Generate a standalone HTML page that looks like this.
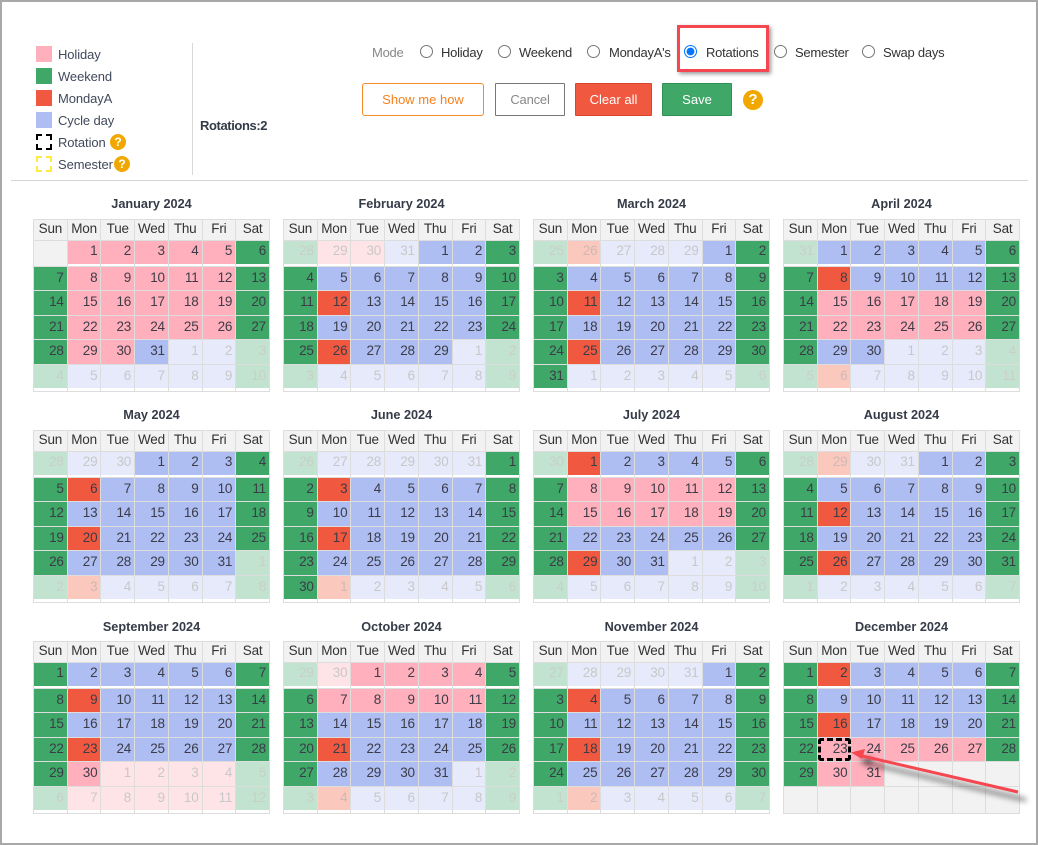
<!DOCTYPE html>
<html><head><meta charset="utf-8"><title>Calendar</title>
<style>
html,body{margin:0;padding:0;background:#fff}
body{position:relative;width:1038px;height:845px;overflow:hidden;font-family:"Liberation Sans",sans-serif;color:#3c4252}
#f{position:absolute;left:0;top:0;width:1034px;height:841px;border:2px solid #a8a8a8;pointer-events:none}
.a{position:absolute;white-space:nowrap}
.s{position:absolute;left:36px;width:16px;height:16px}
.l{position:absolute;left:58px;font-size:13px;line-height:16px;letter-spacing:-.1px;color:#404a5c;margin-top:1px}
.q{position:absolute;width:16px;height:16px;border-radius:50%;background:#f0a800;color:#fff;font-weight:bold;font-size:12px;line-height:16px;text-align:center}
.r{position:absolute;top:45px;margin:0;width:13px;height:13px}
.t{position:absolute;top:45px;font-size:13px;line-height:16px;color:#333;letter-spacing:-.25px;white-space:nowrap}
.btn{position:absolute;top:83px;height:33px;box-sizing:border-box;font-size:13px;line-height:31px;text-align:center;border:1px solid;border-radius:1px}
.h{position:absolute;width:237px;text-align:center;font-weight:bold;font-size:12.7px;line-height:16px;color:#363b48;margin-top:1px}
table{position:absolute;width:237px;table-layout:fixed;border-collapse:collapse;border:1px solid #ddd;font-size:13.5px;color:#3c3c48;letter-spacing:-.2px}
th,td{border:1px solid #ddd;padding:0}
th{background:#f2f2f2;font-weight:normal;text-align:center;height:21px;color:#333;padding-bottom:3px;box-sizing:border-box;line-height:14px}
td{text-align:right;padding-right:3px;padding-bottom:1px;box-sizing:border-box;height:24.5px;line-height:14px;background:linear-gradient(var(--c),var(--c)) 0 0/100% calc(100% - var(--g,0px)) no-repeat}
tr.o td{height:25.5px;--g:2px;padding-bottom:4px}
tr.z td{height:27.5px;--g:3px;padding-bottom:3px}
.p{--c:#ffb0bc}.g{--c:#3fa767}.r0{--c:#f0583f}.b{--c:#aebef2}.e{--c:#f2f2f2;--g:0px!important}
.x{--c:#ffe4e7;color:#c8c8c8}.y{--c:#c2e3cf;color:#c8cfc8}.w{--c:#fbc8be;color:#d0b8b4}.v{--c:#e6eafb;color:#c8c8c8}
tr.o td.e,tr.z td.e{--g:0px}
</style></head><body>
<div class="s" style="top:46px;background:#ffb0bc"></div><div class="l" style="top:46px">Holiday</div>
<div class="s" style="top:68px;background:#3fa767"></div><div class="l" style="top:68px">Weekend</div>
<div class="s" style="top:90px;background:#f0583f"></div><div class="l" style="top:90px">MondayA</div>
<div class="s" style="top:112px;background:#aebef2"></div><div class="l" style="top:112px">Cycle day</div>
<svg class="s" style="top:134px" viewBox="0 0 16 16"><path d="M1 6V1H6M10 1H15V6M15 10V15H10M6 15H1V10" fill="none" stroke="#000" stroke-width="2"/></svg><div class="l" style="top:134px">Rotation</div><div class="q" style="left:110px;top:134px">?</div>
<svg class="s" style="top:156px" viewBox="0 0 16 16"><path d="M1 6V1H6M10 1H15V6M15 10V15H10M6 15H1V10" fill="none" stroke="#ffe93c" stroke-width="2"/></svg><div class="l" style="top:156px">Semester</div><div class="q" style="left:114px;top:156px">?</div>
<div class="a" style="left:192px;top:43px;width:1px;height:132px;background:#d8d8d8"></div>
<div class="a" style="left:11px;top:180px;width:1017px;height:1px;background:#d5d5d5"></div>
<div class="a" style="left:200px;top:118px;font-size:13px;line-height:16px;font-weight:bold;color:#333a48;letter-spacing:-.4px">Rotations:2</div>

<div class="t" style="left:372px;color:#888">Mode</div>
<input class="r" type="radio" style="left:420px"><div class="t" style="left:441px">Holiday</div>
<input class="r" type="radio" style="left:498px"><div class="t" style="left:519px">Weekend</div>
<input class="r" type="radio" style="left:587px"><div class="t" style="left:609px">MondayA's</div>
<input class="r" type="radio" checked style="left:684px"><div class="t" style="left:706px">Rotations</div>
<input class="r" type="radio" style="left:774px"><div class="t" style="left:795px">Semester</div>
<input class="r" type="radio" style="left:862px"><div class="t" style="left:883px">Swap days</div>
<div class="a" style="left:677px;top:25px;width:86px;height:41px;border:3px solid #f4474f;box-shadow:2px 2px 4px rgba(0,0,0,.4)"></div>

<div class="btn" style="left:362px;width:122px;border-color:#f58a2a;color:#f58220;border-radius:3px">Show me how</div>
<div class="btn" style="left:495px;width:70px;border-color:#777;color:#888;letter-spacing:-.2px">Cancel</div>
<div class="btn" style="left:575px;width:77px;border-color:#d8452e;background:#f0583f;color:#fff">Clear all</div>
<div class="btn" style="left:662px;width:70px;border-color:#2f8f55;background:#3fa767;color:#fff">Save</div>
<div class="q" style="left:743px;top:90px;width:20px;height:20px;line-height:20px;font-size:15px">?</div>

<div class="h" style="left:33px;top:195px">January 2024</div>
<table style="left:33px;top:219px"><tr><th>Sun<th>Mon<th>Tue<th>Wed<th>Thu<th>Fri<th>Sat
<tr class="o"><td class="e"><td class="p">1<td class="p">2<td class="p">3<td class="p">4<td class="p">5<td class="g">6
<tr><td class="g">7<td class="p">8<td class="p">9<td class="p">10<td class="p">11<td class="p">12<td class="g">13
<tr><td class="g">14<td class="p">15<td class="p">16<td class="p">17<td class="p">18<td class="p">19<td class="g">20
<tr><td class="g">21<td class="p">22<td class="p">23<td class="p">24<td class="p">25<td class="p">26<td class="g">27
<tr><td class="g">28<td class="p">29<td class="p">30<td class="b">31<td class="v">1<td class="v">2<td class="y">3
<tr class="z"><td class="y">4<td class="v">5<td class="v">6<td class="v">7<td class="v">8<td class="v">9<td class="y">10
</table>

<div class="h" style="left:283px;top:195px">February 2024</div>
<table style="left:283px;top:219px"><tr><th>Sun<th>Mon<th>Tue<th>Wed<th>Thu<th>Fri<th>Sat
<tr class="o"><td class="y">28<td class="x">29<td class="x">30<td class="v">31<td class="b">1<td class="b">2<td class="g">3
<tr><td class="g">4<td class="b">5<td class="b">6<td class="b">7<td class="b">8<td class="b">9<td class="g">10
<tr><td class="g">11<td class="r0">12<td class="b">13<td class="b">14<td class="b">15<td class="b">16<td class="g">17
<tr><td class="g">18<td class="b">19<td class="b">20<td class="b">21<td class="b">22<td class="b">23<td class="g">24
<tr><td class="g">25<td class="r0">26<td class="b">27<td class="b">28<td class="b">29<td class="v">1<td class="y">2
<tr class="z"><td class="y">3<td class="v">4<td class="v">5<td class="v">6<td class="v">7<td class="v">8<td class="y">9
</table>

<div class="h" style="left:533px;top:195px">March 2024</div>
<table style="left:533px;top:219px"><tr><th>Sun<th>Mon<th>Tue<th>Wed<th>Thu<th>Fri<th>Sat
<tr class="o"><td class="y">25<td class="w">26<td class="v">27<td class="v">28<td class="v">29<td class="b">1<td class="g">2
<tr><td class="g">3<td class="b">4<td class="b">5<td class="b">6<td class="b">7<td class="b">8<td class="g">9
<tr><td class="g">10<td class="r0">11<td class="b">12<td class="b">13<td class="b">14<td class="b">15<td class="g">16
<tr><td class="g">17<td class="b">18<td class="b">19<td class="b">20<td class="b">21<td class="b">22<td class="g">23
<tr><td class="g">24<td class="r0">25<td class="b">26<td class="b">27<td class="b">28<td class="b">29<td class="g">30
<tr class="z"><td class="g">31<td class="v">1<td class="v">2<td class="v">3<td class="v">4<td class="v">5<td class="y">6
</table>

<div class="h" style="left:783px;top:195px">April 2024</div>
<table style="left:783px;top:219px"><tr><th>Sun<th>Mon<th>Tue<th>Wed<th>Thu<th>Fri<th>Sat
<tr class="o"><td class="y">31<td class="b">1<td class="b">2<td class="b">3<td class="b">4<td class="b">5<td class="g">6
<tr><td class="g">7<td class="r0">8<td class="b">9<td class="b">10<td class="b">11<td class="b">12<td class="g">13
<tr><td class="g">14<td class="p">15<td class="p">16<td class="p">17<td class="p">18<td class="p">19<td class="g">20
<tr><td class="g">21<td class="p">22<td class="p">23<td class="p">24<td class="p">25<td class="p">26<td class="g">27
<tr><td class="g">28<td class="b">29<td class="b">30<td class="v">1<td class="v">2<td class="v">3<td class="y">4
<tr class="z"><td class="y">5<td class="w">6<td class="v">7<td class="v">8<td class="v">9<td class="v">10<td class="y">11
</table>

<div class="h" style="left:33px;top:406px">May 2024</div>
<table style="left:33px;top:430px"><tr><th>Sun<th>Mon<th>Tue<th>Wed<th>Thu<th>Fri<th>Sat
<tr class="o"><td class="y">28<td class="v">29<td class="v">30<td class="b">1<td class="b">2<td class="b">3<td class="g">4
<tr><td class="g">5<td class="r0">6<td class="b">7<td class="b">8<td class="b">9<td class="b">10<td class="g">11
<tr><td class="g">12<td class="b">13<td class="b">14<td class="b">15<td class="b">16<td class="b">17<td class="g">18
<tr><td class="g">19<td class="r0">20<td class="b">21<td class="b">22<td class="b">23<td class="b">24<td class="g">25
<tr><td class="g">26<td class="b">27<td class="b">28<td class="b">29<td class="b">30<td class="b">31<td class="y">1
<tr class="z"><td class="y">2<td class="w">3<td class="v">4<td class="v">5<td class="v">6<td class="v">7<td class="y">8
</table>

<div class="h" style="left:283px;top:406px">June 2024</div>
<table style="left:283px;top:430px"><tr><th>Sun<th>Mon<th>Tue<th>Wed<th>Thu<th>Fri<th>Sat
<tr class="o"><td class="y">26<td class="v">27<td class="v">28<td class="v">29<td class="v">30<td class="v">31<td class="g">1
<tr><td class="g">2<td class="r0">3<td class="b">4<td class="b">5<td class="b">6<td class="b">7<td class="g">8
<tr><td class="g">9<td class="b">10<td class="b">11<td class="b">12<td class="b">13<td class="b">14<td class="g">15
<tr><td class="g">16<td class="r0">17<td class="b">18<td class="b">19<td class="b">20<td class="b">21<td class="g">22
<tr><td class="g">23<td class="b">24<td class="b">25<td class="b">26<td class="b">27<td class="b">28<td class="g">29
<tr class="z"><td class="g">30<td class="w">1<td class="v">2<td class="v">3<td class="v">4<td class="v">5<td class="y">6
</table>

<div class="h" style="left:533px;top:406px">July 2024</div>
<table style="left:533px;top:430px"><tr><th>Sun<th>Mon<th>Tue<th>Wed<th>Thu<th>Fri<th>Sat
<tr class="o"><td class="y">30<td class="r0">1<td class="b">2<td class="b">3<td class="b">4<td class="b">5<td class="g">6
<tr><td class="g">7<td class="p">8<td class="p">9<td class="p">10<td class="p">11<td class="p">12<td class="g">13
<tr><td class="g">14<td class="p">15<td class="p">16<td class="p">17<td class="p">18<td class="p">19<td class="g">20
<tr><td class="g">21<td class="b">22<td class="b">23<td class="b">24<td class="b">25<td class="b">26<td class="g">27
<tr><td class="g">28<td class="r0">29<td class="b">30<td class="b">31<td class="v">1<td class="v">2<td class="y">3
<tr class="z"><td class="y">4<td class="v">5<td class="v">6<td class="v">7<td class="v">8<td class="v">9<td class="y">10
</table>

<div class="h" style="left:783px;top:406px">August 2024</div>
<table style="left:783px;top:430px"><tr><th>Sun<th>Mon<th>Tue<th>Wed<th>Thu<th>Fri<th>Sat
<tr class="o"><td class="y">28<td class="w">29<td class="v">30<td class="v">31<td class="b">1<td class="b">2<td class="g">3
<tr><td class="g">4<td class="b">5<td class="b">6<td class="b">7<td class="b">8<td class="b">9<td class="g">10
<tr><td class="g">11<td class="r0">12<td class="b">13<td class="b">14<td class="b">15<td class="b">16<td class="g">17
<tr><td class="g">18<td class="b">19<td class="b">20<td class="b">21<td class="b">22<td class="b">23<td class="g">24
<tr><td class="g">25<td class="r0">26<td class="b">27<td class="b">28<td class="b">29<td class="b">30<td class="g">31
<tr class="z"><td class="y">1<td class="v">2<td class="v">3<td class="v">4<td class="v">5<td class="v">6<td class="y">7
</table>

<div class="h" style="left:33px;top:618px">September 2024</div>
<table style="left:33px;top:641px"><tr><th>Sun<th>Mon<th>Tue<th>Wed<th>Thu<th>Fri<th>Sat
<tr class="o"><td class="g">1<td class="b">2<td class="b">3<td class="b">4<td class="b">5<td class="b">6<td class="g">7
<tr><td class="g">8<td class="r0">9<td class="b">10<td class="b">11<td class="b">12<td class="b">13<td class="g">14
<tr><td class="g">15<td class="b">16<td class="b">17<td class="b">18<td class="b">19<td class="b">20<td class="g">21
<tr><td class="g">22<td class="r0">23<td class="b">24<td class="b">25<td class="b">26<td class="b">27<td class="g">28
<tr><td class="g">29<td class="p">30<td class="x">1<td class="x">2<td class="x">3<td class="x">4<td class="y">5
<tr class="z"><td class="y">6<td class="x">7<td class="x">8<td class="x">9<td class="x">10<td class="x">11<td class="y">12
</table>

<div class="h" style="left:283px;top:618px">October 2024</div>
<table style="left:283px;top:641px"><tr><th>Sun<th>Mon<th>Tue<th>Wed<th>Thu<th>Fri<th>Sat
<tr class="o"><td class="y">29<td class="x">30<td class="p">1<td class="p">2<td class="p">3<td class="p">4<td class="g">5
<tr><td class="g">6<td class="p">7<td class="p">8<td class="p">9<td class="p">10<td class="p">11<td class="g">12
<tr><td class="g">13<td class="b">14<td class="b">15<td class="b">16<td class="b">17<td class="b">18<td class="g">19
<tr><td class="g">20<td class="r0">21<td class="b">22<td class="b">23<td class="b">24<td class="b">25<td class="g">26
<tr><td class="g">27<td class="b">28<td class="b">29<td class="b">30<td class="b">31<td class="v">1<td class="y">2
<tr class="z"><td class="y">3<td class="w">4<td class="v">5<td class="v">6<td class="v">7<td class="v">8<td class="y">9
</table>

<div class="h" style="left:533px;top:618px">November 2024</div>
<table style="left:533px;top:641px"><tr><th>Sun<th>Mon<th>Tue<th>Wed<th>Thu<th>Fri<th>Sat
<tr class="o"><td class="y">27<td class="v">28<td class="v">29<td class="v">30<td class="v">31<td class="b">1<td class="g">2
<tr><td class="g">3<td class="r0">4<td class="b">5<td class="b">6<td class="b">7<td class="b">8<td class="g">9
<tr><td class="g">10<td class="b">11<td class="b">12<td class="b">13<td class="b">14<td class="b">15<td class="g">16
<tr><td class="g">17<td class="r0">18<td class="b">19<td class="b">20<td class="b">21<td class="b">22<td class="g">23
<tr><td class="g">24<td class="b">25<td class="b">26<td class="b">27<td class="b">28<td class="b">29<td class="g">30
<tr class="z"><td class="y">1<td class="w">2<td class="v">3<td class="v">4<td class="v">5<td class="v">6<td class="y">7
</table>

<div class="h" style="left:783px;top:618px">December 2024</div>
<table style="left:783px;top:641px"><tr><th>Sun<th>Mon<th>Tue<th>Wed<th>Thu<th>Fri<th>Sat
<tr class="o"><td class="g">1<td class="r0">2<td class="b">3<td class="b">4<td class="b">5<td class="b">6<td class="g">7
<tr><td class="g">8<td class="b">9<td class="b">10<td class="b">11<td class="b">12<td class="b">13<td class="g">14
<tr><td class="g">15<td class="r0">16<td class="b">17<td class="b">18<td class="b">19<td class="b">20<td class="g">21
<tr><td class="g">22<td class="p">23<td class="p">24<td class="p">25<td class="p">26<td class="p">27<td class="g">28
<tr><td class="g">29<td class="p">30<td class="p">31<td class="e"><td class="e"><td class="e"><td class="e">
<tr class="z"><td class="e"><td class="e"><td class="e"><td class="e"><td class="e"><td class="e"><td class="e">
</table>

<div class="a" style="left:818px;top:738px;width:27px;height:17px;border:3px dashed #000;border-radius:3px"></div>
<svg class="a" style="left:840px;top:740px;filter:drop-shadow(8px 8px 3px rgba(0,0,0,.6))" width="190" height="70" viewBox="840 740 190 70"><path d="M1018 792L858 755" fill="none" stroke="#f4474f" stroke-width="3"/><path d="M851 752.5L865 749L862 759Z" fill="#f4474f"/></svg>
<div id="f"></div>
</body></html>
